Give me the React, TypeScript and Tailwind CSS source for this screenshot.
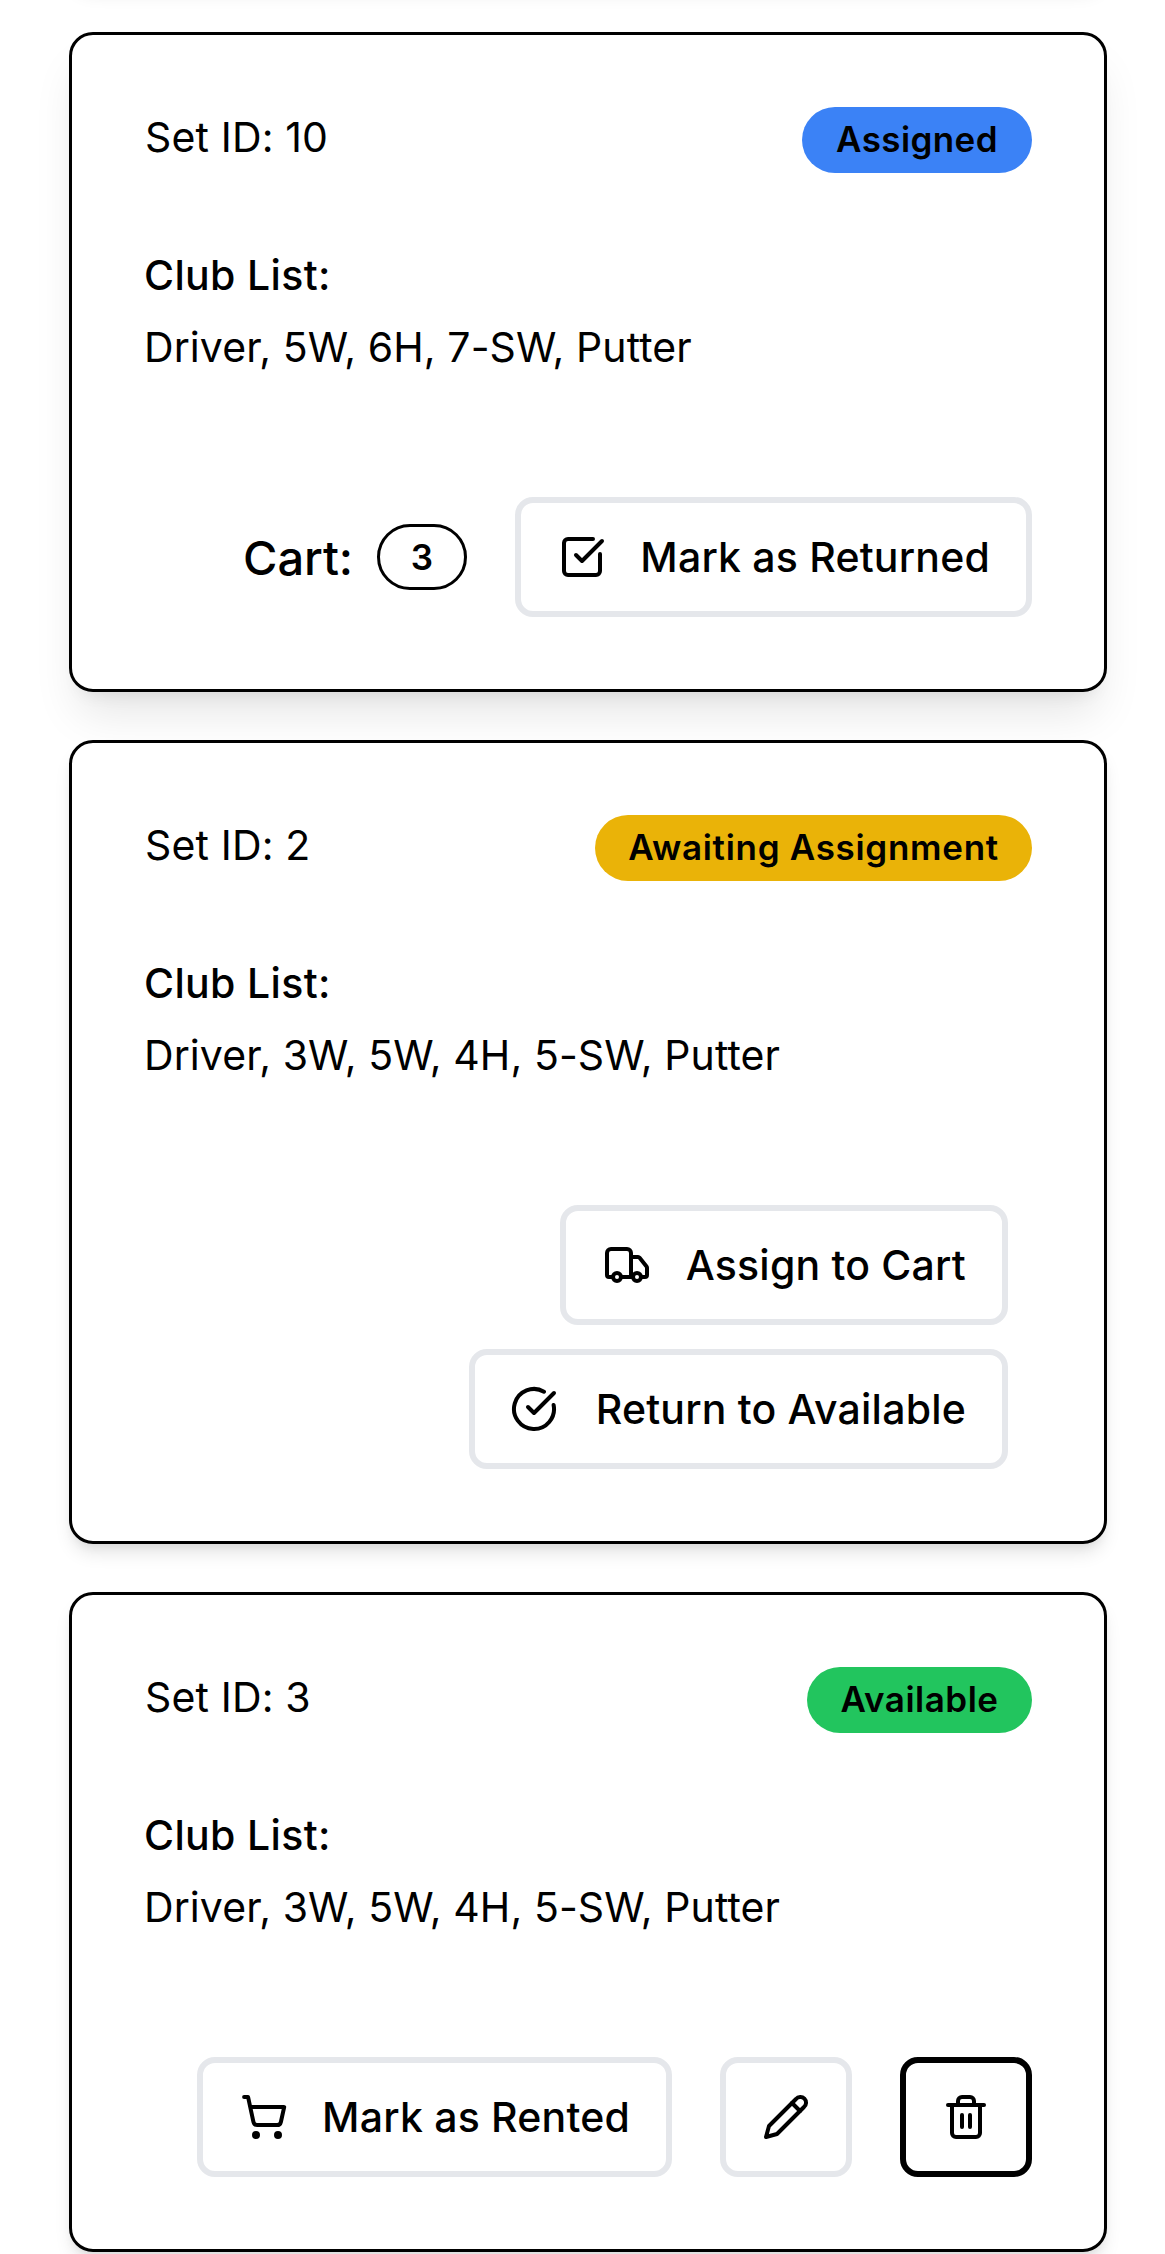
import type { ReactNode } from 'react';
import { CircleCheckBig, ShoppingCart, Trash2, Truck } from 'lucide-react';

function Icon({ children }: { children: ReactNode }) {
  return (
    <svg viewBox="0 0 24 24" fill="none" stroke="currentColor" strokeWidth="2" strokeLinecap="round" strokeLinejoin="round" className="size-12 shrink-0">
      {children}
    </svg>
  );
}

function ActionButton({ icon, label, className = '' }: { icon: ReactNode; label: string; className?: string }) {
  return (
    <button className={`flex h-[120px] items-center justify-between rounded-[18px] border-[6px] border-[#e5e7eb] pr-9 text-[41px]/[60px] font-medium tracking-[0.2px] ${className}`}>
      {icon}
      <span className="whitespace-nowrap">{label}</span>
    </button>
  );
}

type CardProps = {
  id: number;
  status: string;
  badge: string;
  clubs: string;
  shadow: string;
  children: ReactNode;
};

function SetCard({ id, status, badge, clubs, shadow, children }: CardProps) {
  return (
    <section className={`relative rounded-[24px] border-[3px] border-black bg-white p-[72px] ${shadow}`}>
      <div className="mb-[66px] flex h-[66px] items-start justify-between">
        <h3 className="pl-px text-[41px]/[60px] tracking-[0.15px]">Set ID: {id}</h3>
        <span className={`flex h-[66px] items-center justify-center rounded-full pb-0.5 text-[35px]/[48px] font-semibold whitespace-nowrap ${badge}`}>{status}</span>
      </div>
      <div className="mb-[114px] text-[41px]/[72px]">
        <p className="font-medium tracking-[0.35px]">Club List:</p>
        <p className="tracking-[0.09px]">{clubs}</p>
      </div>
      {children}
    </section>
  );
}

const SHADOW_MD = 'shadow-[0_12px_18px_-3px_rgba(0,0,0,0.1),0_6px_12px_-6px_rgba(0,0,0,0.1)]';
const SHADOW_LG = 'shadow-[0_30px_45px_-9px_rgba(0,0,0,0.1),0_12px_18px_-12px_rgba(0,0,0,0.1)]';

export default function App() {
  return (
    <main className="h-[2254px] overflow-hidden bg-white pr-[58px] pl-[69px] font-['Inter',sans-serif] text-black">
      <div className="-mt-[216px] flex flex-col gap-12">
        <div className={`h-[200px] rounded-[24px] border-[3px] border-black bg-white ${SHADOW_MD}`} />

        <SetCard id={10} status="Assigned" badge="w-[230px] bg-[#3b82f6] tracking-[0.4px]" clubs="Driver, 5W, 6H, 7-SW, Putter" shadow={SHADOW_LG}>
          <div className="flex items-center justify-end">
            <span className="mr-6 pt-0.5 text-[47px]/[72px] font-medium tracking-[-0.1px]">Cart:</span>
            <span className="mr-12 flex h-[66px] w-[90px] items-center justify-center rounded-full border-[3px] border-black text-[35px]/[48px] font-semibold">3</span>
            <ActionButton
              className="w-[517px] pl-[37px]"
              label="Mark as Returned"
              icon={
                <Icon>
                  <path d="m9 11 3 3L22 4" />
                  <path d="M21 10.5V19a2 2 0 0 1-2 2H5a2 2 0 0 1-2-2V5a2 2 0 0 1 2-2h12.5" />
                </Icon>
              }
            />
          </div>
        </SetCard>

        <SetCard id={2} status="Awaiting Assignment" badge="w-[437px] bg-[#eab308] tracking-[0.7px]" clubs="Driver, 3W, 5W, 4H, 5-SW, Putter" shadow={SHADOW_MD}>
          <div className="mr-6 flex flex-col items-end gap-6">
            <ActionButton className="w-[448px] pl-[37px]" label="Assign to Cart" icon={<Truck className="size-12 shrink-0" />} />
            <ActionButton className="w-[539px] pl-[35px]" label="Return to Available" icon={<CircleCheckBig className="size-12 shrink-0" />} />
          </div>
        </SetCard>

        <SetCard id={3} status="Available" badge="w-[225px] bg-[#22c55e] tracking-[0.5px]" clubs="Driver, 3W, 5W, 4H, 5-SW, Putter" shadow={SHADOW_MD}>
          <div className="flex justify-end gap-12">
            <ActionButton className="w-[475px] pl-[37px]" label="Mark as Rented" icon={<ShoppingCart className="size-12 shrink-0" />} />
            <button aria-label="Edit set" className="flex h-[120px] w-[132px] items-center justify-center rounded-[18px] border-[6px] border-[#e5e7eb]">
              <Icon>
                <path d="M17 3a2.85 2.83 0 1 1 4 4L7.5 20.5 2 22l1.5-5.5Z" />
                <path d="m15 5 4 4" />
              </Icon>
            </button>
            <button aria-label="Delete set" className="flex h-[120px] w-[132px] items-center justify-center rounded-[18px] border-[6px] border-black">
              <Trash2 className="size-12 shrink-0" />
            </button>
          </div>
        </SetCard>
      </div>
    </main>
  );
}
